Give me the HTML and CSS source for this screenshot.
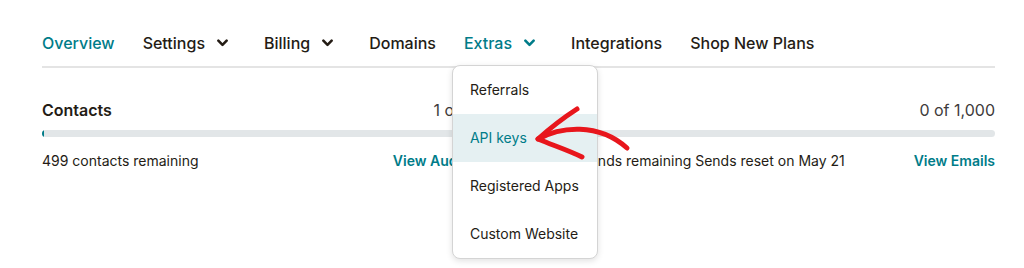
FILE: index.html
```html
<!DOCTYPE html>
<html lang="en">
<head>
    <meta charset="UTF-8">
    <meta name="viewport" content="width=device-width, initial-scale=1.0">
    <title>Account - Extras</title>
    <link rel="stylesheet" href="styles.css">
</head>
<body>
    <div class="page">
        <nav class="tabs">
            <a class="tab active" href="#">Overview</a>
            <a class="tab has-menu" href="#">Settings <svg class="chev" viewBox="0 0 12 8"><path d="M1.5 1.5 L6 6 L10.5 1.5"/></svg></a>
            <a class="tab has-menu" href="#">Billing <svg class="chev" viewBox="0 0 12 8"><path d="M1.5 1.5 L6 6 L10.5 1.5"/></svg></a>
            <a class="tab" href="#">Domains</a>
            <div class="tab has-menu open">
                <span>Extras</span> <svg class="chev" viewBox="0 0 12 8"><path d="M1.5 1.5 L6 6 L10.5 1.5"/></svg>
                <ul class="dropdown">
                    <li>Referrals</li>
                    <li class="selected">API keys</li>
                    <li>Registered Apps</li>
                    <li>Custom Website</li>
                </ul>
            </div>
            <a class="tab" href="#">Integrations</a>
            <a class="tab" href="#">Shop New Plans</a>
        </nav>

        <div class="usage">
            <div class="usage-col">
                <div class="row">
                    <span class="label">Contacts</span>
                    <span class="count">1 of 500</span>
                </div>
                <div class="bar"><div class="fill" style="width: 0.2%"></div></div>
                <div class="row small">
                    <span>499 contacts remaining</span>
                    <a href="#" class="link">View Audience</a>
                </div>
            </div>
            <div class="usage-col">
                <div class="row">
                    <span class="label">Emails</span>
                    <span class="count">0 of 1,000</span>
                </div>
                <div class="bar"><div class="fill" style="width: 0%"></div></div>
                <div class="row small">
                    <span>1,000 sends remaining Sends reset on May 21</span>
                    <a href="#" class="link">View Emails</a>
                </div>
            </div>
        </div>

        <svg class="scribble" width="1024" height="268" viewBox="0 0 1024 268">
            <path d="M538 139 C 560 127, 598 122, 627 148"/>
            <path d="M577 109 C 560 120, 548 130, 538 139 C 552 145, 568 150, 582 157"/>
        </svg>
    </div>
</body>
</html>
```

FILE: styles.css
```css
body {
    margin: 0;
    font-family: Inter, "Noto Sans", sans-serif;
    color: #241c15;
    background: #fff;
}

.page {
    position: relative;
    width: 1024px;
    height: 268px;
    overflow: hidden;
}

.tabs {
    display: flex;
    align-items: center;
    gap: 28px;
    margin: 0 29px 0 42px;
    padding-top: 20px;
    height: 46px;
    border-bottom: 2px solid #e4e4e4;
}

.tab {
    position: relative;
    display: flex;
    align-items: center;
    height: 46px;
    font-size: 16px;
    font-weight: 500;
    color: #241c15;
    text-decoration: none;
}

.tab.active,
.tab.open {
    color: #007c89;
}

.chev {
    width: 11px;
    height: 8px;
    margin-left: 12px;
    margin-right: 8px;
    fill: none;
    stroke: currentColor;
    stroke-width: 2.8;
    stroke-linecap: round;
    stroke-linejoin: round;
}

.dropdown {
    position: absolute;
    top: 45px;
    left: -12px;
    width: 144px;
    margin: 0;
    padding: 0;
    list-style: none;
    background: #fff;
    border: 1px solid #d4d4d4;
    border-radius: 8px;
    box-shadow: 0 2px 6px rgba(0, 0, 0, 0.12);
    z-index: 2;
}

.dropdown li {
    height: 48px;
    line-height: 48px;
    padding-left: 17px;
    font-size: 14px;
    font-weight: 400;
    color: #241c15;
    white-space: nowrap;
}

.dropdown li.selected {
    background: #e5f0f2;
    color: #007c89;
}

.usage {
    display: grid;
    grid-template-columns: 1fr 1fr;
    gap: 48px;
    margin: 30px 29px 0 42px;
}

.row {
    display: flex;
    justify-content: space-between;
    align-items: center;
    height: 24px;
    font-size: 16px;
}

.label {
    font-weight: 600;
}

.count {
    color: #403b3b;
}

.bar {
    height: 7px;
    margin: 8px 0 11px;
    background: #e2e6e8;
    border-radius: 4px;
    overflow: hidden;
}

.fill {
    min-width: 2px;
    height: 100%;
    background: #007c89;
}

.row.small {
    font-size: 14px;
}

.link {
    color: #007c89;
    font-weight: 600;
    text-decoration: none;
}

.scribble {
    position: absolute;
    left: 0;
    top: 0;
    pointer-events: none;
    z-index: 3;
    fill: none;
    stroke: #e8161c;
    stroke-width: 5;
    stroke-linecap: round;
    stroke-linejoin: round;
}
```
